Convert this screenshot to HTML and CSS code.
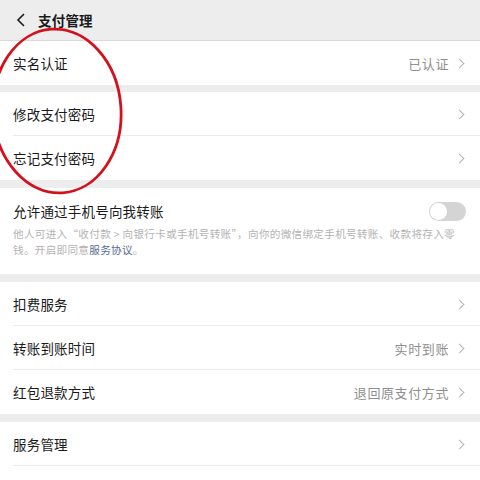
FILE: index.html
```html
<!DOCTYPE html>
<html lang="zh">
<head>
<meta charset="utf-8">
<link rel="stylesheet" href="styles.css">
</head>
<body>
<div class="page">
  <header class="header">
    <svg class="back" width="10" height="14" viewBox="0 0 10 14"><path d="M8 1 L2 7 L8 13" fill="none" stroke="#1a1a1a" stroke-width="1.6"/></svg>
    <span class="title">支付管理</span>
  </header>

  <section class="group first">
    <div class="row"><span class="label">实名认证</span><span class="value">已认证</span><span class="chev"></span></div>
  </section>

  <section class="group">
    <div class="row divided"><span class="label">修改支付密码</span><span class="chev"></span></div>
    <div class="row"><span class="label">忘记支付密码</span><span class="chev"></span></div>
  </section>

  <section class="group toggle-group">
    <div class="toggle-head">
      <span class="label">允许通过手机号向我转账</span>
      <span class="switch"><span class="knob"></span></span>
    </div>
    <p class="desc">他人可进入“收付款 &gt; 向银行卡或手机号转账”，向你的微信绑定手机号转账、收款将存入零钱。开启即同意<a class="link">服务协议</a>。</p>
  </section>

  <section class="group">
    <div class="row divided"><span class="label">扣费服务</span><span class="chev"></span></div>
    <div class="row divided"><span class="label">转账到账时间</span><span class="value">实时到账</span><span class="chev"></span></div>
    <div class="row"><span class="label">红包退款方式</span><span class="value">退回原支付方式</span><span class="chev"></span></div>
  </section>

  <section class="group">
    <div class="row divided"><span class="label">服务管理</span><span class="chev"></span></div>
    <div class="row"></div>
  </section>

  <svg class="circle" width="480" height="480" viewBox="0 0 480 480">
    <ellipse cx="57" cy="111" rx="64" ry="82" transform="rotate(-4 57 111)" fill="none" stroke="#d3101c" stroke-width="2.8"/>
  </svg>
</div>
</body>
</html>
```
FILE: styles.css
```css
* { box-sizing: border-box; }
html, body { margin: 0; padding: 0; }
body {
  background: #ededed;
  font-family: "Noto Sans CJK SC", "Noto Sans", sans-serif;
  color: #1a1a1a;
}
.page {
  position: relative;
  width: 480px;
  height: 480px;
  overflow: hidden;
  background: #ededed;
}
.header {
  height: 41px;
  display: flex;
  align-items: center;
  padding-left: 16px;
  border-bottom: 1px solid #d9d9d9;
  background: #ededed;
}
.back { margin-right: 12px; margin-top: -1px; }
.title {
  font-size: 13.5px;
  font-weight: 600;
  letter-spacing: 0.2px;
}
.group {
  background: #fff;
  margin-bottom: 8px;
}
.group.first { margin-bottom: 7px; }
.row {
  height: 44px;
  display: flex;
  align-items: center;
  padding: 0 15px 0 13px;
  position: relative;
}
.row.divided::after {
  content: "";
  position: absolute;
  left: 13px;
  right: 0;
  bottom: 0;
  height: 1px;
  background: #ececec;
}
.label {
  font-size: 13.5px;
  flex: 1;
  letter-spacing: 0.2px;
}
.value {
  font-size: 13px;
  color: #8f8f8f;
  margin-right: 7px;
  letter-spacing: 0.6px;
}
.chev {
  width: 7px;
  height: 7px;
  border-top: 1.3px solid #b3b3b3;
  border-right: 1.3px solid #b3b3b3;
  transform: rotate(45deg);
  margin-right: 2px;
}
.toggle-group {
  height: 86px;
  padding: 12px 13px 0 13px;
}
.toggle-head {
  display: flex;
  align-items: center;
  height: 22px;
}
.switch {
  width: 37px;
  height: 19px;
  border-radius: 10px;
  background: #d4d4d4;
  position: relative;
  margin-right: 1px;
}
.knob {
  position: absolute;
  left: 1px;
  top: 1px;
  width: 17px;
  height: 17px;
  border-radius: 50%;
  background: #fff;
}
.desc {
  margin: 4px 0 0 0;
  font-size: 10.6px;
  line-height: 16px;
  color: #b3b3b3;
  letter-spacing: 0.3px;
}
.link { color: #576b95; }
.circle {
  position: absolute;
  left: 0;
  top: 0;
  pointer-events: none;
}
```
